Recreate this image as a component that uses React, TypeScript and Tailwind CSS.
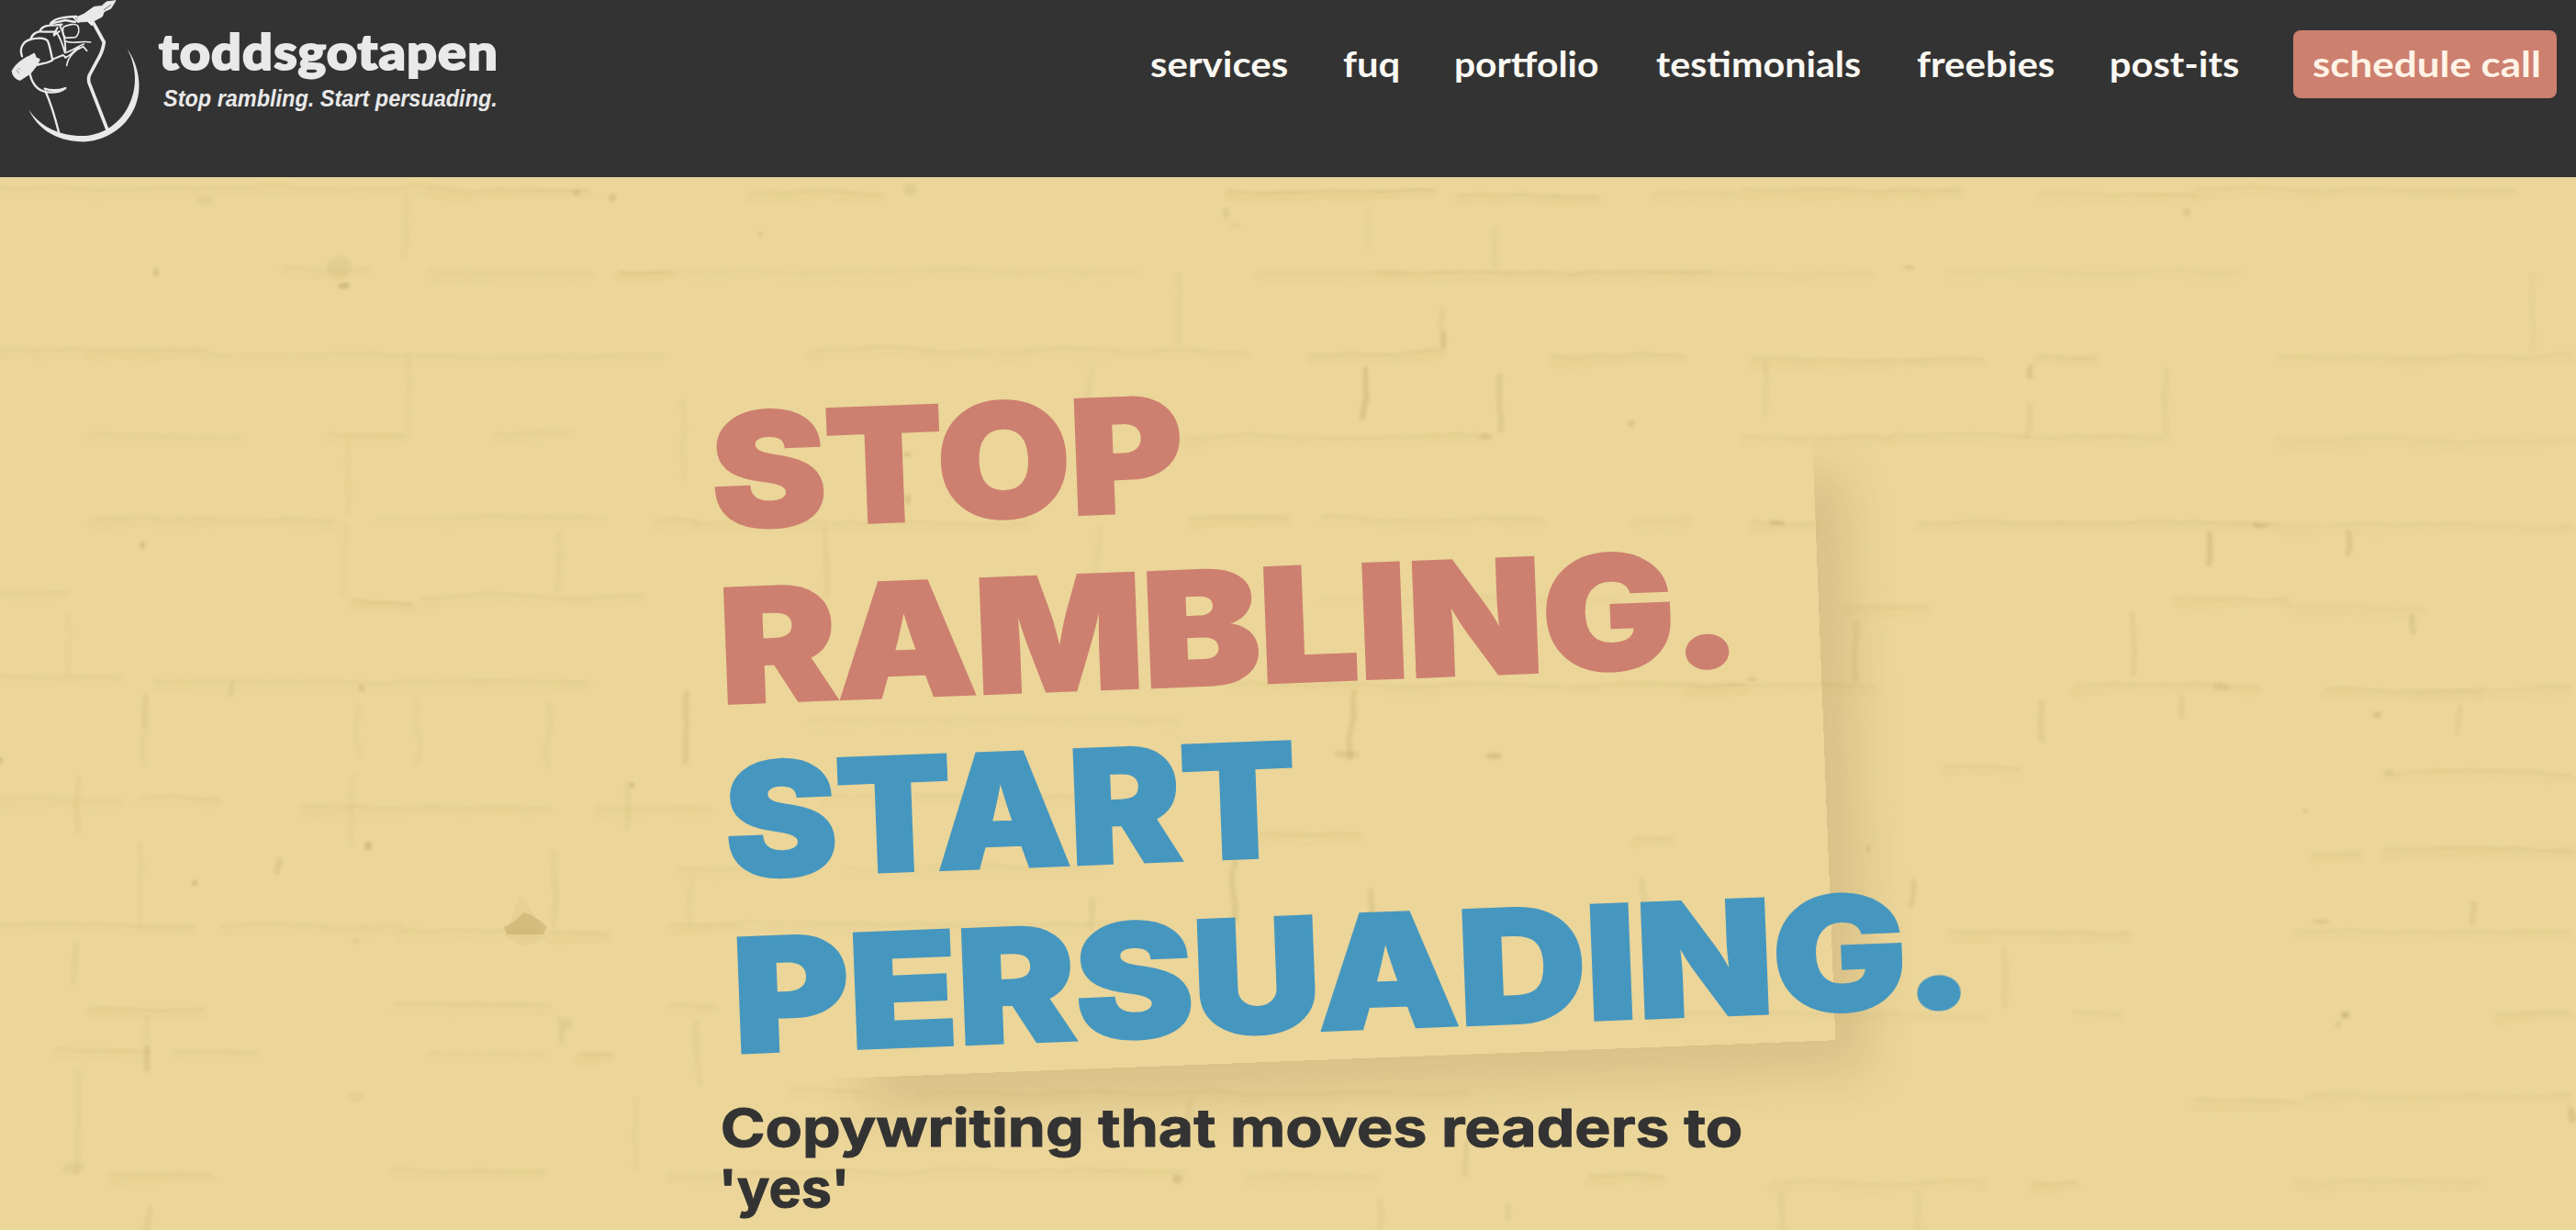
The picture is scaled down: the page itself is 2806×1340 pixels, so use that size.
import { useLayoutEffect, useRef, useState } from "react";
import { clsx } from "clsx";

type FitProps = {
  text: string;
  /** width of the drawn glyphs, in pixels */
  ink: number;
  /** distance from the box's left edge to the first glyph's edge */
  inset?: number;
  className?: string;
};

/** One line of text whose glyphs are stretched to an exact width. */
function FitText({ text, ink, inset = 0, className }: FitProps) {
  const ref = useRef<HTMLSpanElement>(null);
  const [transform, setTransform] = useState("none");

  useLayoutEffect(() => {
    const node = ref.current;
    const ctx = document.createElement("canvas").getContext("2d");
    if (!node || !ctx) return;
    const cs = getComputedStyle(node);
    ctx.font = `${cs.fontStyle} ${cs.fontWeight} ${cs.fontSize} ${cs.fontFamily}`;
    ctx.letterSpacing = cs.letterSpacing === "normal" ? "0px" : cs.letterSpacing;
    const m = ctx.measureText(text);
    const scale = ink / (m.actualBoundingBoxRight + m.actualBoundingBoxLeft);
    setTransform(`translateX(${inset + m.actualBoundingBoxLeft * scale}px) scaleX(${scale})`);
  }, [text, ink, inset]);

  return (
    <span
      ref={ref}
      className={clsx("block w-max origin-left whitespace-nowrap", className)}
      style={{ transform }}
    >
      {text}
    </span>
  );
}

function FistLogo() {
  return (
    <svg viewBox="0 0 480 480" className="h-40 w-40 shrink-0" fill="none" stroke="#e9e9e9" strokeLinecap="round" strokeLinejoin="round">
      <path
        d="M416 160C455 216 467 292 440 352C408 426 330 468 258 463C184 459 122 422 94 358C128 410 184 440 254 444C322 448 384 414 418 350C450 292 448 222 416 160Z"
        fill="#e9e9e9"
        stroke="none"
      />
      <path d="M306 76L340 138Q336 168 320 194L292 246Q286 262 294 278L350 422" strokeWidth="11" />
      <path d="M98 242C106 278 128 302 168 302Q196 302 214 288C196 294 170 298 146 290" strokeWidth="7" />
      <path d="M148 298C168 340 180 384 193 436" strokeWidth="7" />
      <path d="M72 184C62 158 76 134 100 129C118 123 146 122 156 134C164 150 166 176 172 196C156 208 138 206 124 212" strokeWidth="7" />
      <path d="M100 128C106 108 124 100 144 104L180 104M130 102C138 84 158 82 182 82L202 80M164 80C172 60 206 56 250 54M170 76L214 66L246 72" strokeWidth="7" />
      <path d="M182 102C198 122 206 150 212 172M172 194L206 180L216 188M196 84C208 106 214 142 214 166" strokeWidth="6" />
      <path d="M208 88C224 80 246 76 254 84C262 98 256 116 246 122L214 124C206 114 202 100 208 88Z" strokeWidth="5" />
      <path d="M212 134C240 146 266 132 296 138M214 172C236 166 252 152 274 144M218 214C222 186 246 162 272 152L284 166M212 188C232 184 242 162 258 154" strokeWidth="5" />
      <path d="M176 116L194 102M188 90L176 112M238 54L256 72" strokeWidth="6" />
      <path
        d="M40 232C46 216 66 196 98 182L112 174L118 188L130 194L122 212L100 240L66 262C52 260 40 248 40 232Z"
        fill="#e9e9e9"
        strokeWidth="3"
      />
      <path
        d="M252 56L274 46L308 22L332 20L348 6L378 2L362 28L340 38L334 54L308 68L300 84L286 70L256 72Z"
        fill="#e9e9e9"
        strokeWidth="3"
      />
      <path d="M340 32L362 16" stroke="#333" strokeWidth="2" />
      <path d="M54 228L62 240M60 222L66 228" stroke="#999" strokeWidth="3" />
    </svg>
  );
}

/** Mortar lines: [x1, x2, y, strength] */
const COURSES: number[][] = [
  [0, 470, 204, 0.5], [470, 640, 207, 0.9], [820, 960, 208, 0.8], [1340, 1560, 208, 1.2], [1590, 1740, 212, 1], [1800, 1890, 210, 0.7],
  [1900, 2135, 206, 0.9], [2220, 2390, 212, 0.7], [2390, 2740, 206, 0.7], [1370, 2040, 297, 0.5], [2120, 2440, 296, 0.4], [310, 400, 292, 0.5],
  [470, 640, 296, 0.5], [675, 735, 296, 1.2], [740, 1240, 295, 0.4], [1500, 1860, 296, 0.5], [0, 90, 380, 0.6], [95, 225, 382, 0.8],
  [230, 720, 387, 0.4], [880, 1080, 380, 0.6], [1090, 1360, 382, 0.6], [1430, 1570, 385, 0.9], [1690, 1830, 388, 0.9], [1910, 2160, 391, 0.9],
  [2220, 2280, 388, 0.9], [2480, 2800, 388, 0.6], [100, 260, 474, 0.4], [360, 440, 475, 0.7], [540, 620, 471, 0.5], [1285, 1610, 475, 0.6],
  [1900, 2060, 477, 0.7], [2060, 2360, 475, 0.6], [2480, 2800, 478, 0.5], [100, 360, 564, 0.6], [410, 660, 563, 0.4], [715, 760, 565, 0.7],
  [760, 1120, 568, 0.5], [1300, 1400, 564, 1], [1440, 1680, 564, 0.6], [1780, 1840, 564, 0.5], [1910, 1980, 570, 1], [2090, 2480, 569, 0.9],
  [2480, 2800, 571, 0.5], [0, 70, 645, 0.6], [385, 448, 656, 1.2], [460, 700, 649, 0.6], [2010, 2100, 660, 0.8], [2370, 2490, 652, 0.8],
  [2490, 2640, 660, 0.5], [1440, 1760, 652, 0.4], [0, 130, 735, 0.5], [170, 640, 742, 0.6], [1340, 1900, 746, 0.6], [1840, 2040, 746, 0.6],
  [2260, 2460, 745, 0.8], [2535, 2700, 752, 1], [2700, 2800, 750, 0.6], [0, 130, 870, 0.5], [150, 240, 869, 0.7], [330, 600, 880, 0.6],
  [650, 770, 879, 0.6], [880, 1280, 783, 0.4], [2120, 2200, 836, 0.7], [2600, 2800, 841, 0.7], [0, 210, 1007, 0.6], [240, 440, 1008, 0.5],
  [440, 580, 1014, 0.6], [600, 660, 1016, 0.8], [730, 800, 1007, 0.5], [900, 1180, 867, 0.5], [1360, 1480, 907, 0.8], [1780, 1820, 912, 0.9],
  [2520, 2570, 928, 1], [2600, 2800, 926, 0.9], [60, 160, 1143, 0.7], [190, 280, 1146, 0.6], [470, 590, 1147, 0.5], [630, 665, 1148, 1.1],
  [120, 230, 1279, 0.8], [430, 590, 1274, 0.6], [2125, 2320, 1014, 0.8], [2500, 2800, 1014, 0.6], [1800, 2160, 1104, 0.5], [2260, 2310, 1104, 0.7],
  [2720, 2800, 1104, 0.9], [2390, 2500, 1199, 0.8], [2510, 2800, 1193, 0.6], [900, 1290, 1276, 0.6], [730, 900, 1278, 0.6], [1360, 1500, 1280, 0.6],
  [1730, 1810, 1282, 1], [1930, 2160, 1288, 0.6], [2215, 2260, 1288, 1.1], [2500, 2700, 1287, 0.5], [740, 880, 946, 0.5], [920, 1200, 944, 0.4],
  [430, 600, 1095, 0.6], [100, 220, 1100, 0.9], [730, 780, 1095, 0.6], [740, 1240, 1006, 0.4], [1000, 1600, 1190, 0.6], [860, 940, 1188, 0.7],
];

/** Joints between bricks: [x, y1, y2, strength] */
const JOINTS: number[][] = [
  [447, 390, 470, 0.6], [380, 480, 560, 0.3], [375, 570, 650, 0.3], [610, 585, 640, 0.6], [900, 575, 650, 0.8], [745, 440, 520, 0.4],
  [442, 215, 280, 0.4], [1285, 300, 375, 0.5], [1188, 400, 460, 0.5], [75, 670, 735, 0.3], [157, 760, 790, 1.1], [158, 790, 830, 0.5],
  [748, 755, 830, 1.5], [597, 765, 835, 0.5], [455, 765, 830, 0.4], [86, 848, 905, 0.8], [384, 848, 915, 0.6], [684, 855, 900, 0.7],
  [153, 920, 1006, 0.6], [302, 935, 950, 1.6], [604, 930, 1010, 0.7], [752, 960, 1005, 0.4], [1570, 338, 380, 0.8], [1572, 365, 380, 1.5],
  [1487, 402, 455, 2.2], [1635, 410, 470, 1.4], [1923, 397, 450, 0.7], [2212, 400, 412, 2], [2209, 440, 475, 0.9], [2361, 400, 470, 0.7],
  [2408, 582, 615, 2.2], [2558, 580, 605, 1.9], [2324, 670, 732, 0.9], [2628, 668, 685, 1.7], [2224, 765, 805, 1.2], [2376, 762, 778, 1.2],
  [2678, 768, 800, 0.9], [1196, 575, 650, 0.4], [1473, 755, 825, 1.6], [1345, 885, 1000, 1.7], [1190, 982, 1010, 1], [1790, 960, 1010, 1],
  [1495, 970, 1000, 1.6], [2082, 960, 985, 1.6], [2184, 1035, 1098, 0.8], [2693, 985, 1003, 1.4], [2022, 680, 740, 1.1], [160, 1140, 1165, 1.4],
  [161, 1110, 1170, 0.6], [613, 1110, 1135, 1], [760, 1115, 1180, 0.7], [692, 1200, 1270, 0.4], [85, 1170, 1275, 0.5], [163, 1315, 1340, 0.9],
  [1597, 1245, 1280, 1.3], [1297, 1200, 1225, 1], [2090, 1300, 1340, 0.6], [1942, 1300, 1340, 0.7], [1645, 1318, 1330, 1], [2760, 300, 380, 0.4],
  [1626, 250, 290, 0.5], [1490, 230, 270, 0.4], [1503, 1310, 1340, 0.8], [82, 1030, 1070, 0.7], [390, 770, 825, 0.4], [252, 745, 756, 1],
];

/** Chips and pits in the paint: [x, y, rx, ry, opacity] */
const PITS: number[][] = [
  [371, 289, 13, 12, 0.1], [373, 309, 6, 4, 0.3], [170, 296, 3, 5, 0.25], [222, 219, 9, 6, 0.1], [628, 210, 4, 4, 0.2], [991, 206, 7, 7, 0.12],
  [828, 255, 2, 3, 0.2], [666, 214, 4, 4, 0.2], [155, 596, 3, 4, 0.25], [393, 750, 4, 5, 0.2], [2, 828, 3, 3, 0.3], [690, 854, 3, 3, 0.3],
  [402, 919, 4, 4, 0.3], [215, 960, 3, 3, 0.3], [2079, 292, 5, 2, 0.2], [2382, 230, 4, 5, 0.15], [2420, 748, 10, 4, 0.15], [2590, 780, 5, 3, 0.2],
  [2553, 1107, 5, 5, 0.3], [2545, 1118, 3, 3, 0.2], [1936, 569, 9, 3, 0.25], [2530, 1005, 10, 3, 0.15], [1630, 824, 9, 4, 0.25], [988, 495, 4, 3, 0.2],
  [989, 545, 3, 6, 0.2], [1468, 822, 14, 4, 0.15], [387, 1024, 3, 4, 0.15], [2463, 572, 9, 2, 0.25], [2510, 884, 3, 2, 0.2], [1778, 463, 4, 4, 0.2],
  [1620, 478, 7, 3, 0.2], [1346, 245, 6, 4, 0.08], [1335, 232, 4, 6, 0.12], [2036, 924, 2, 3, 0.2], [2602, 840, 8, 3, 0.12], [80, 1272, 12, 6, 0.1],
  [1910, 740, 5, 2, 0.2], [2802, 1215, 4, 9, 0.2], [1282, 1285, 5, 5, 0.2], [390, 1196, 8, 6, 0.08], [620, 1115, 6, 6, 0.1],
];

function BrickWall() {
  return (
    <svg viewBox="0 193 2806 1147" className="absolute inset-0 h-full w-full" preserveAspectRatio="none">
      <defs>
        <filter id="rough" x="-20" y="180" width="2850" height="1180" filterUnits="userSpaceOnUse">
          <feTurbulence type="fractalNoise" baseFrequency="0.012 0.02" numOctaves="3" seed="7" result="noise" />
          <feDisplacementMap in="SourceGraphic" in2="noise" scale="11" xChannelSelector="R" yChannelSelector="G" />
          <feGaussianBlur stdDeviation="1.6" />
        </filter>
      </defs>
      <rect x="0" y="193" width="2806" height="1147" fill="#ebd599" />
      <g filter="url(#rough)" stroke="#a08848" fill="#a08848" strokeLinecap="round">
        {COURSES.map(([x1, x2, y, s], i) => (
          <g key={i}>
            <path d={`M${x1} ${y}L${x2} ${y + 1}`} strokeWidth={3} opacity={s * 0.11} />
            <path d={`M${x1} ${y + 6}L${x2} ${y + 4}`} strokeWidth={11} opacity={s * 0.03} />
          </g>
        ))}
        {JOINTS.map(([x, y1, y2, s], i) => (
          <path key={i} d={`M${x} ${y1}L${x - 1} ${y2}`} strokeWidth={6} opacity={s * 0.1} />
        ))}
        {PITS.map(([x, y, rx, ry, o], i) => (
          <ellipse key={i} cx={x} cy={y} rx={rx} ry={ry} stroke="none" opacity={o} />
        ))}
      </g>
      <g fill="#a08848">
        <path d="M570 994Q585 998 596 1010L592 1018H552L549 1010Q562 1004 570 994Z" opacity="0.28" />
        <path d="M566 975L575 985L595 1022L570 1032L550 1020Z" opacity="0.06" />
      </g>
    </svg>
  );
}

const NAV = [
  { text: "services", ink: 149, box: "w-[150px]" },
  { text: "fuq", ink: 60, box: "w-[63px]" },
  { text: "portfolio", ink: 155, box: "w-[158px]" },
  { text: "testimonials", ink: 222, box: "w-[224px]" },
  { text: "freebies", ink: 149, box: "w-[152px]" },
  { text: "post-its", ink: 138, box: "w-[138px]" },
];

export default function App() {
  return (
    <div className="flex h-[1340px] w-[2806px] flex-col overflow-hidden bg-[#ebd599]">
      <header className="flex h-[193px] shrink-0 items-start justify-between bg-[#333333] pr-[21px]">
        <div className="flex">
          <FistLogo />
          <div className="flex flex-col pt-[26px] text-[#e9e9e9]">
            <FitText
              text="toddsgotapen"
              ink={366}
              inset={13}
              className="font-['Lato',sans-serif] text-[54px] leading-[60px] font-black tracking-[0.02em] [-webkit-text-stroke:2px_#e9e9e9]"
            />
            <FitText
              text="Stop rambling. Start persuading."
              ink={362}
              inset={18}
              className="mt-[6px] font-['Liberation_Sans',sans-serif] text-[25px] leading-[30px] font-bold italic"
            />
          </div>
        </div>
        <nav className="flex items-start gap-[60px] pt-[33px] font-['Lato',sans-serif] text-[39px] leading-[72px] font-bold text-[#faf8f2]">
          {NAV.map((item) => (
            <a key={item.text} className={item.box}>
              <FitText text={item.text} ink={item.ink} />
            </a>
          ))}
          <a className="h-[74px] w-[287px] rounded-lg bg-[#cd806f] text-[#fff3e6]">
            <FitText text="schedule call" ink={247} inset={21} />
          </a>
        </nav>
      </header>

      <main className="relative flex-1">
        <BrickWall />
        <div className="relative ml-[768px] w-[1203px] pt-[224.5px]">
          <h1 className="origin-top-left rotate-[-2.2deg] font-['Inter',sans-serif] text-[172px] leading-[190.5px] font-black tracking-[-0.008em] text-[#cd806f] shadow-[90px_90px_50px_-54px_rgba(130,95,60,0.17)]">
            <FitText text="STOP" ink={506} inset={7} className="[-webkit-text-stroke:3px_#cd806f]" />
            <div className="grid *:col-start-1 *:row-start-1">
              <FitText text="RAMBLING" ink={1027} inset={13} className="[-webkit-text-stroke:3px_#cd806f]" />
              <FitText text="." ink={43} inset={1058} className="[-webkit-text-stroke:5px_#cd806f]" />
            </div>
            <FitText text="START" ink={615} inset={7} className="text-[#4697bf] [-webkit-text-stroke:3px_#4697bf]" />
            <div className="grid text-[#4697bf] *:col-start-1 *:row-start-1">
              <FitText text="PERSUADING" ink={1265} inset={13} className="[-webkit-text-stroke:3px_#4697bf]" />
              <FitText text="." ink={43} inset={1296} className="[-webkit-text-stroke:5px_#4697bf]" />
            </div>
          </h1>
          <div className="mt-[16.5px] font-['Inter',sans-serif] text-[57px] leading-[66px] font-bold text-[#333333]">
            <FitText
              text="Copywriting that moves readers to"
              ink={1109}
              inset={19}
              className="[-webkit-text-stroke:1px_#333333]"
            />
            <FitText text="'yes'" ink={132} inset={20} className="[-webkit-text-stroke:1px_#333333]" />
          </div>
        </div>
      </main>
    </div>
  );
}
